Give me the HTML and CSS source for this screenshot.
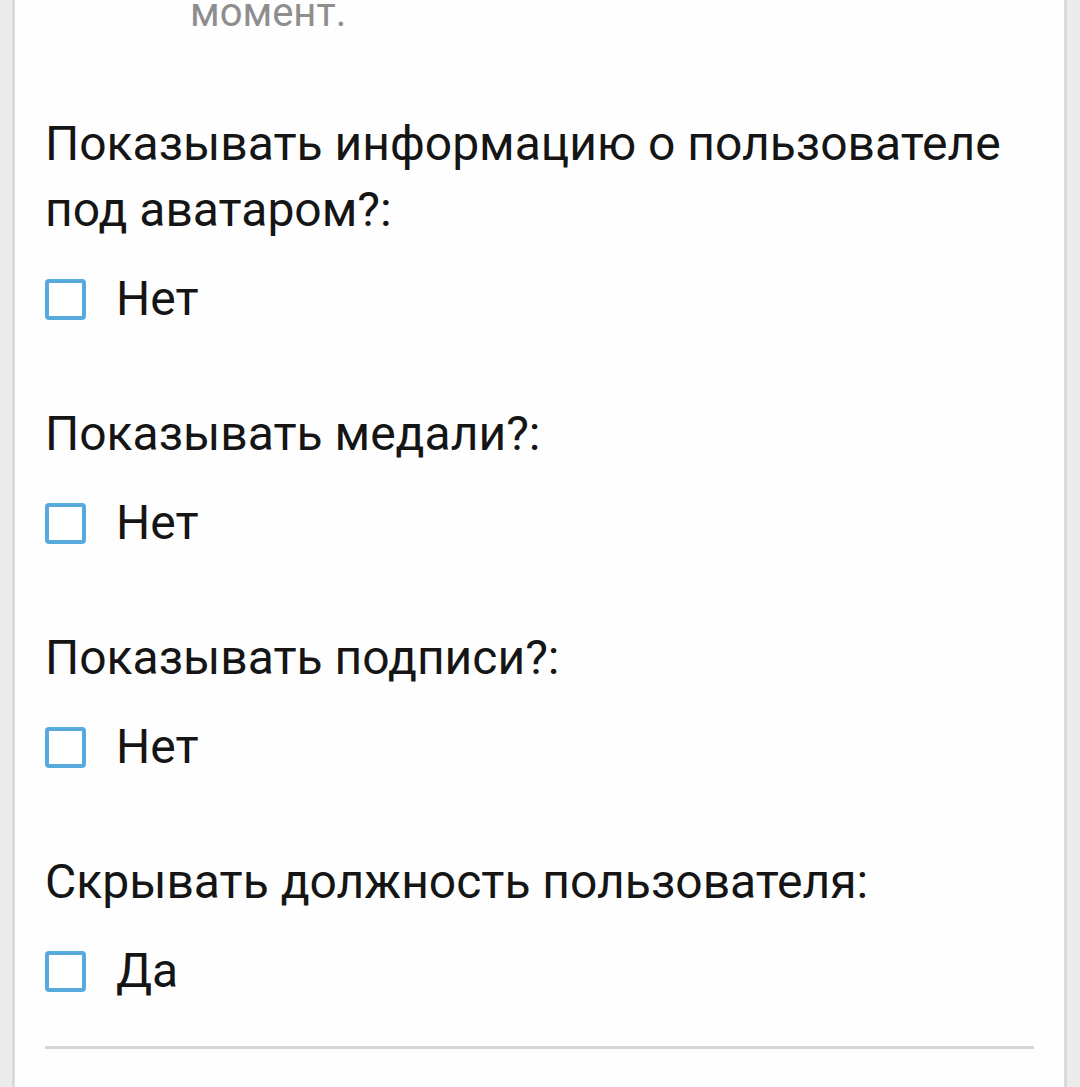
FILE: index.html
```html
<!DOCTYPE html>
<html lang="ru">
<head>
<meta charset="utf-8">
<title>Настройки</title>
<link rel="stylesheet" href="styles.css">
</head>
<body>
<div class="card">
  <p class="desc">момент.</p>

  <div class="field">
    <div class="question">Показывать информацию о пользователе под аватаром?:</div>
    <label class="option"><span class="box"></span><span class="opt-text">Нет</span></label>
  </div>

  <div class="field">
    <div class="question">Показывать медали?:</div>
    <label class="option"><span class="box"></span><span class="opt-text">Нет</span></label>
  </div>

  <div class="field">
    <div class="question">Показывать подписи?:</div>
    <label class="option"><span class="box"></span><span class="opt-text">Нет</span></label>
  </div>

  <div class="field">
    <div class="question">Скрывать должность пользователя:</div>
    <label class="option"><span class="box"></span><span class="opt-text">Да</span></label>
  </div>

  <hr class="divider">
</div>
</body>
</html>
```

FILE: styles.css
```css
html, body {
  margin: 0;
  padding: 0;
}
body {
  background: #ebebeb;
  font-family: Roboto, "Noto Sans", "Liberation Sans", sans-serif;
  height: 1087px;
  overflow: hidden;
}
.card {
  margin: 0 13px 0 12px;
  background: #fefefe;
  border-left: 3px solid #dadada;
  border-right: 3px solid #dadada;
  padding: 0 30px 40px 30px;
  min-height: 1087px;
  box-sizing: border-box;
}
.desc {
  margin: -8px 0 0 145px;
  font-size: 40px;
  line-height: 42px;
  color: #8e8e8e;
}
.field {
  margin-top: 69px;
}
.field:first-of-type {
  margin-top: 77px;
}
.question {
  font-size: 48px;
  line-height: 66px;
  color: #151515;
}
.option {
  display: flex;
  align-items: center;
  margin-top: 23px;
  height: 66px;
}
.box {
  width: 41px;
  height: 41px;
  box-sizing: border-box;
  border: 4px solid #58a9de;
  border-radius: 4px;
  background: #fff;
  flex: none;
}
.opt-text {
  margin-left: 30px;
  font-size: 48px;
  line-height: 66px;
  color: #151515;
}
.divider {
  margin: 42px 0 0 0;
  border: none;
  height: 3px;
  background: #d6d6d6;
}
```
